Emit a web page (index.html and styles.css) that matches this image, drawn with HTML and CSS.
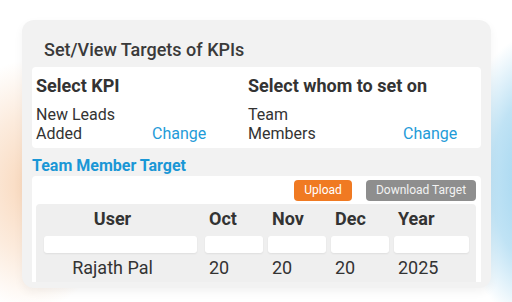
FILE: index.html
```html
<!DOCTYPE html>
<html>
<head>
<meta charset="utf-8">
<link rel="stylesheet" href="styles.css">
</head>
<body>
<div class="card">
  <div class="title">Set/View Targets of KPIs</div>
  <div class="panel select-panel">
    <div class="select-col">
      <div class="heading">Select KPI</div>
      <div class="value-row">
        <div class="value kpi-value">New Leads Added</div>
        <div class="change">Change</div>
      </div>
    </div>
    <div class="select-col">
      <div class="heading">Select whom to set on</div>
      <div class="value-row">
        <div class="value whom-value">Team Members</div>
        <div class="change">Change</div>
      </div>
    </div>
  </div>
  <div class="section-title">Team Member Target</div>
  <div class="panel target-panel">
    <div class="actions">
      <button class="btn btn-upload">Upload</button>
      <button class="btn btn-download">Download Target</button>
    </div>
    <div class="table">
      <div class="th user-cell">User</div>
      <div class="th">Oct</div>
      <div class="th">Nov</div>
      <div class="th">Dec</div>
      <div class="th">Year</div>
      <div class="inp inp-user"></div>
      <div class="inp"></div>
      <div class="inp"></div>
      <div class="inp"></div>
      <div class="inp inp-year"></div>
      <div class="td user-cell">Rajath Pal</div>
      <div class="td">20</div>
      <div class="td">20</div>
      <div class="td">20</div>
      <div class="td">2025</div>
    </div>
  </div>
</div>
</body>
</html>
```

FILE: styles.css
```css
html, body {
  margin: 0;
  padding: 0;
}
body {
  width: 512px;
  height: 302px;
  overflow: hidden;
  font-family: Roboto, "Liberation Sans", sans-serif;
  color: #333;
  background:
    radial-gradient(ellipse 90px 125px at 30px 185px, rgba(249, 216, 188, 1), rgba(249, 216, 188, 0.5) 55%, rgba(249, 216, 188, 0) 100%),
    radial-gradient(ellipse 90px 150px at 545px 180px, rgba(150, 208, 238, 1), rgba(150, 208, 238, 0.6) 60%, rgba(150, 208, 238, 0) 100%),
    #fff;
}
.card {
  box-sizing: border-box;
  margin: 20px 0 0 22px;
  width: 469px;
  height: 268px;
  background: #f2f2f2;
  border-radius: 12px;
  box-shadow: 0 4px 10px rgba(0, 0, 0, 0.05);
  padding: 0 10px 6px 10px;
  display: flex;
  flex-direction: column;
}
.title {
  margin: 19px 0 6px 12px;
  font-size: 18px;
  line-height: 22px;
  font-weight: 500;
  color: #3a3a3a;
}
.panel {
  background: #fff;
  border-radius: 4px;
}
.select-panel {
  display: grid;
  grid-template-columns: 212px 1fr;
  padding: 8px 4px 5px 4px;
}
.heading {
  font-size: 18px;
  line-height: 22px;
  font-weight: 700;
  color: #333;
}
.value-row {
  display: flex;
  align-items: flex-end;
  margin-top: 8px;
}
.value {
  font-size: 16px;
  line-height: 19px;
  color: #333;
}
.kpi-value {
  width: 116px;
}
.whom-value {
  width: 155px;
  padding-right: 55px;
  box-sizing: border-box;
}
.change {
  font-size: 16px;
  line-height: 19px;
  color: #1f9bd8;
}
.section-title {
  margin: 8px 0 1px 0;
  font-size: 16px;
  line-height: 19px;
  font-weight: 700;
  color: #1a97d6;
}
.target-panel {
  flex: 1;
  min-height: 0;
  overflow: hidden;
  border-radius: 4px 4px 0 0;
  padding: 4px 5px 0 4px;
}
.actions {
  display: flex;
  justify-content: flex-end;
  gap: 14px;
}
.btn {
  border: none;
  height: 21px;
  padding: 0;
  border-radius: 4px;
  font-family: Roboto, "Liberation Sans", sans-serif;
  font-size: 12px;
  line-height: 21px;
  color: #fff;
}
.btn-upload {
  background: #f07a22;
  width: 58px;
}
.btn-download {
  background: #8e8e8e;
  width: 110px;
  color: #f2f2f2;
}
.table {
  margin-top: 3px;
  background: #efefef;
  border-radius: 4px 4px 0 0;
  padding: 4px 8px 12px 8px;
  display: grid;
  grid-template-columns: 156px 58px 58px 58px 75px;
  column-gap: 5px;
}
.th {
  font-size: 18px;
  line-height: 22px;
  font-weight: 700;
  color: #333;
  padding-left: 4px;
}
.td {
  font-size: 18px;
  line-height: 22px;
  color: #333;
  padding-left: 4px;
  margin-top: 4px;
}
.user-cell {
  width: 137px;
  padding-left: 0;
  text-align: center;
}
.inp {
  margin-top: 6px;
  height: 17px;
  background: #fff;
  border-radius: 3px;
  box-shadow: 0 1px 2px rgba(0, 0, 0, 0.07);
}
.inp-user {
  width: 153px;
}
```
